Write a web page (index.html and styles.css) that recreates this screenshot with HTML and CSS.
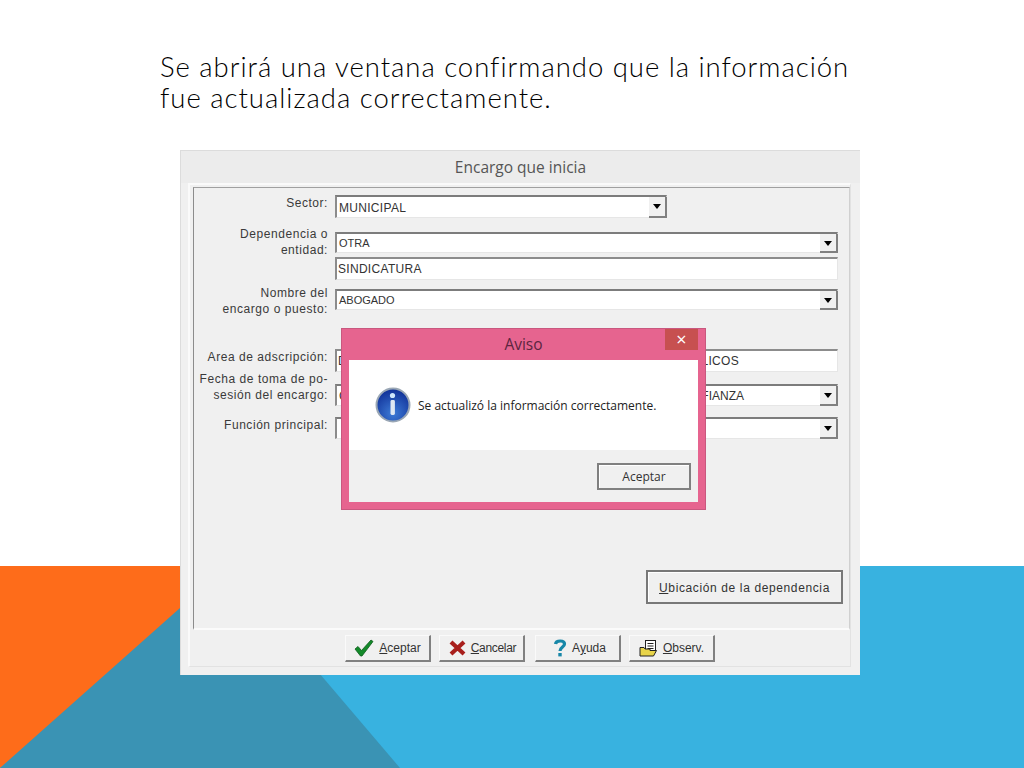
FILE: index.html
```html
<!DOCTYPE html>
<html lang="es">
<head>
  <meta charset="UTF-8">
  <title>Encargo que inicia</title>
  <link rel="stylesheet" href="styles.css">
</head>
<body>
  <div class="slide">
    <svg class="backdrop" width="1024" height="202" viewBox="0 566 1024 202">
      <rect x="0" y="566" width="1024" height="202" fill="#38b2e0"/>
      <polygon points="0,566 260,566 0,768" fill="#fe6c1a"/>
      <polygon points="0,768 400,768 240,580 180,608" fill="#3a93b4"/>
    </svg>

    <h1 class="heading">Se abrirá una ventana confirmando que la información<br>fue actualizada correctamente.</h1>

    <div class="window">
      <div class="window-title">Encargo que inicia</div>
      <div class="frame">
        <div class="group">
          <div class="row row-sector">
            <div class="label">Sector:</div>
            <div class="field field-short field-tall"><span class="value">MUNICIPAL</span><span class="arrow"></span></div>
          </div>
          <div class="row row-dep">
            <div class="label label-dep">Dependencia o<br>entidad:</div>
            <div class="stack">
              <div class="field"><span class="value value-small">OTRA</span><span class="arrow"></span></div>
              <div class="field field-tall field-text"><span class="value">SINDICATURA</span></div>
            </div>
          </div>
          <div class="row row-puesto">
            <div class="label label-puesto">Nombre del<br>encargo o puesto:</div>
            <div class="field"><span class="value value-small">ABOGADO</span><span class="arrow"></span></div>
          </div>
          <div class="row row-area">
            <div class="label">Area de adscripción:</div>
            <div class="field field-tall field-text field-split"><span class="value">D</span><span class="value value-area">PUBLICOS</span></div>
          </div>
          <div class="row row-fecha">
            <div class="label label-fecha">Fecha de toma de po-<br>sesión del encargo:</div>
            <div class="field field-mid field-split"><span class="value">C</span><span class="value value-fecha">CONFIANZA</span><span class="arrow"></span></div>
          </div>
          <div class="row row-funcion">
            <div class="label">Función principal:</div>
            <div class="field field-mid"><span class="value"></span><span class="arrow"></span></div>
          </div>
          <button class="location-btn"><u>U</u>bicación de la dependencia</button>
        </div>

        <div class="toolbar">
          <button class="tool-btn">
            <svg width="20" height="18" viewBox="0 0 20 18"><path d="M1 10 L4 7.5 L7.5 11.5 L17 1 L19 2.5 L8 17 L6.5 17 Z" fill="#138a2a" stroke="#0b5c1a" stroke-width="0.8"/></svg>
            <span><u>A</u>ceptar</span>
          </button>
          <button class="tool-btn tool-btn-cancel">
            <svg width="17" height="16" viewBox="0 0 17 16"><path d="M2 2 L15 14 M15 2 L2 14" stroke="#a81f1c" stroke-width="4.2"/></svg>
            <span><u>C</u>ancelar</span>
          </button>
          <button class="tool-btn tool-btn-help">
            <svg width="14" height="18" viewBox="0 0 14 18"><path d="M2.5 5 C3 1 11.5 1 11.5 5 C11.5 8 7 8 7 12" fill="none" stroke="#1787a8" stroke-width="3.2"/><rect x="5.3" y="14" width="3.4" height="3.4" fill="#1787a8"/></svg>
            <span>A<u>y</u>uda</span>
          </button>
          <button class="tool-btn">
            <svg width="19" height="17" viewBox="0 0 19 17"><rect x="6.5" y="0.5" width="10" height="12" fill="#fff" stroke="#222"/><path d="M8.5 3.5 H14.5 M8.5 6 H14.5 M8.5 8.5 H14.5" stroke="#222"/><path d="M1 7.5 H5 L6 9 H11 V10.5 H17.5 L14.5 16 H1 Z" fill="#e8d44a" stroke="#222"/></svg>
            <span><u>O</u>bserv.</span>
          </button>
        </div>
      </div>
    </div>

    <div class="dialog">
      <div class="dialog-title">Aviso<span class="dialog-close">×</span></div>
      <div class="dialog-body">
        <div class="dialog-message">
          <svg width="36" height="36" viewBox="0 0 36 36">
            <defs>
              <radialGradient id="infoBlue" cx="50%" cy="75%" r="70%">
                <stop offset="0" stop-color="#3d7bd6"/>
                <stop offset="1" stop-color="#12339a"/>
              </radialGradient>
            </defs>
            <circle cx="18" cy="18" r="16.5" fill="url(#infoBlue)" stroke="#9aa7b5" stroke-width="2"/>
            <circle cx="17.5" cy="8.5" r="2.6" fill="#cfe6fb"/>
            <rect x="15.5" y="13" width="4.4" height="15" rx="1.4" fill="#dfe8f2"/>
          </svg>
          <span>Se actualizó la información correctamente.</span>
        </div>
        <div class="dialog-footer">
          <button class="dialog-btn">Aceptar</button>
        </div>
      </div>
    </div>
  </div>
</body>
</html>
```

FILE: styles.css
```css
html, body {
  margin: 0;
  padding: 0;
  background: white;
}

.slide {
  position: relative;
  width: 1024px;
  height: 768px;
  overflow: hidden;
  font-family: "Liberation Sans", Arial, sans-serif;
}

.backdrop {
  position: absolute;
  left: 0;
  bottom: 0;
}

.heading {
  position: relative;
  margin: 0;
  padding: 51px 0 0 160px;
  font-family: "Lato", sans-serif;
  font-size: 27.5px;
  font-weight: 300;
  line-height: 31px;
  letter-spacing: 0.98px;
  color: #000;
}

.window {
  position: relative;
  margin: 37px 0 0 180px;
  width: 680px;
  height: 525px;
  box-sizing: border-box;
  background: #f0f0f0;
  border-top: 1px solid #dcdcdc;
  border-left: 1px solid #dcdcdc;
}

.window-title {
  height: 32px;
  line-height: 32px;
  text-align: center;
  font-family: "Open Sans", sans-serif;
  font-size: 15.5px;
  color: #555;
  background: #ececec;
}

.frame {
  display: flex;
  flex-direction: column;
  margin-left: 7px;
  width: 663px;
  height: 484px;
  box-sizing: border-box;
  border: 1px solid #e2e2e2;
  border-top: 2px solid #fafafa;
  border-left: 2px solid #fafafa;
}

.group {
  display: flex;
  flex-direction: column;
  margin: 2px 0 0 3px;
  height: 443px;
  flex: none;
  box-sizing: border-box;
  padding-top: 7px;
  border-top: 1px solid #a0a0a0;
  border-left: 1px solid #8c8c8c;
  border-right: 1px solid #d0d0d0;
  border-bottom: 2px solid #fbfbfb;
}

.row {
  display: grid;
  grid-template-columns: 134px 503px;
  column-gap: 7px;
  align-items: start;
}

.row-dep { margin-top: 14px; }
.row-puesto { margin-top: 9px; }
.row-area { margin-top: 39px; }
.row-fecha { margin-top: 12px; }
.row-funcion { margin-top: 11px; }

.label {
  height: 16px;
  line-height: 16px;
  text-align: right;
  white-space: nowrap;
  font-size: 12px;
  letter-spacing: 0.55px;
  color: #3a3a3a;
}

.label-dep { margin-top: -6px; }
.label-puesto { margin-top: -4px; }
.label-fecha { margin-top: -13px; }

.stack {
  display: flex;
  flex-direction: column;
  gap: 4px;
}

.field {
  display: flex;
  align-items: center;
  justify-content: space-between;
  height: 21px;
  box-sizing: border-box;
  background: white;
  border-top: 2px solid #7c7c7c;
  border-left: 2px solid #8c8c8c;
  border-right: 1px solid #e6e6e6;
  border-bottom: 1px solid #e6e6e6;
}

.field-tall { height: 23px; }
.field-mid { height: 22px; }
.field-short { width: 332px; }
.field-text { border-top-color: #8c8c8c; }

.value {
  padding: 1px 0 0 2px;
  font-size: 12px;
  letter-spacing: 0.3px;
  color: #333;
}

.field-text .value {
  padding: 0 0 1px 1px;
}

.value-small {
  padding-top: 0;
  font-size: 11px;
  letter-spacing: 0;
}

.field-split .value-area { margin-right: 98px; }
.field-split .value-fecha { margin-left: auto; margin-right: 76px; letter-spacing: 0; }

.arrow {
  position: relative;
  flex: none;
  align-self: stretch;
  width: 16px;
  background: #f0f0f0;
  border-right: 2px solid #808080;
  border-bottom: 2px solid #808080;
  margin-bottom: -1px;
  margin-right: -1px;
}

.arrow::after {
  content: "";
  position: absolute;
  left: 4px;
  top: 7px;
  border-left: 4px solid transparent;
  border-right: 4px solid transparent;
  border-top: 5px solid black;
}

.location-btn {
  align-self: flex-end;
  margin: auto 6px 24px 0;
  width: 197px;
  height: 34px;
  padding: 2px 0 0;
  box-sizing: border-box;
  background: #f0f0f0;
  border: 2px solid #787878;
  box-shadow: inset 1px 1px 0 white;
  font-family: "Liberation Sans", Arial, sans-serif;
  font-size: 12px;
  letter-spacing: 0.62px;
  color: #333;
}

.toolbar {
  display: flex;
  gap: 8px;
  padding: 5px 0 0 155px;
}

.tool-btn {
  display: flex;
  align-items: center;
  justify-content: center;
  gap: 5px;
  width: 86px;
  height: 27px;
  padding: 0;
  box-sizing: border-box;
  background: #f0f0f0;
  border-top: 1px solid #fafafa;
  border-left: 1px solid #fafafa;
  border-right: 2px solid #808080;
  border-bottom: 2px solid #808080;
  font-family: "Liberation Sans", Arial, sans-serif;
  font-size: 12px;
  color: #333;
}

.tool-btn-cancel {
  padding-left: 2px;
  letter-spacing: -0.3px;
}

.tool-btn-help {
  margin-left: 2px;
  padding-left: 4px;
}

.dialog {
  position: absolute;
  left: 341px;
  top: 328px;
  width: 365px;
  height: 182px;
  box-sizing: border-box;
  display: flex;
  flex-direction: column;
  background: #e6648f;
  border: 1px solid #c9587f;
  padding: 0 7px 7px;
}

.dialog-title {
  position: relative;
  height: 31px;
  flex: none;
  line-height: 30px;
  text-align: center;
  font-family: "Open Sans", sans-serif;
  font-size: 15.5px;
  color: #5c2540;
}

.dialog-close {
  position: absolute;
  right: 0;
  top: 0;
  width: 33px;
  height: 21px;
  line-height: 20px;
  background: #c75050;
  color: white;
  font-size: 18px;
}

.dialog-body {
  flex: 1;
  display: flex;
  flex-direction: column;
  background: #f0f0f0;
}

.dialog-message {
  display: flex;
  align-items: center;
  gap: 7px;
  height: 90px;
  padding-left: 26px;
  box-sizing: border-box;
  background: white;
  font-family: "Open Sans", sans-serif;
  font-size: 12px;
  color: #222;
}

.dialog-footer {
  display: flex;
  justify-content: flex-end;
  padding: 13px 7px 0 0;
}

.dialog-btn {
  width: 94px;
  height: 27px;
  padding: 0;
  box-sizing: border-box;
  background: #f0f0f0;
  border: 2px solid #808080;
  box-shadow: inset 1px 1px 0 white;
  font-family: "Open Sans", sans-serif;
  font-size: 12px;
  color: #333;
}
```
